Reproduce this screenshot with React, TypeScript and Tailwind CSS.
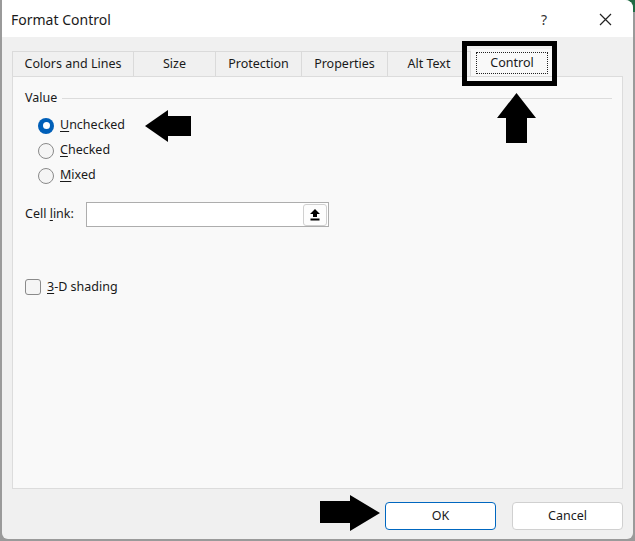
import React from "react";

const font = { fontFamily: '"Noto Sans", "Open Sans", sans-serif' };

function Radio({ checked, label, u }: { checked?: boolean; label: string; u: number }) {
  return (
    <div className="flex items-center h-[25px]">
      {checked ? (
        <span className="w-[16px] h-[16px] rounded-full bg-[#005fb8] flex items-center justify-center">
          <span className="w-[7px] h-[7px] rounded-full bg-white" />
        </span>
      ) : (
        <span className="w-[16px] h-[16px] rounded-full border border-[#8a8a8a] bg-[#f5f5f5]" />
      )}
      <span className="ml-[6px] text-[12.5px] text-[#1a1a1a]">
        <span className="underline underline-offset-2">{label.slice(0, u)}</span>
        {label.slice(u)}
      </span>
    </div>
  );
}

export default function App() {
  const tabs = [
    { t: "Colors and Lines", w: 122 },
    { t: "Size", w: 82 },
    { t: "Protection", w: 86 },
    { t: "Properties", w: 86 },
    { t: "Alt Text", w: 83 },
  ];
  return (
    <div className="w-[635px] h-[541px] bg-[#9a9a9a] overflow-hidden relative" style={font}>
      <div className="absolute right-0 top-0 w-[12px] h-[12px] bg-[#1f6b44]" />
      <div className="ml-[2px] w-[631px] h-[539px] bg-[#f0f0f0] rounded-tr-[8px] rounded-bl-[6px] rounded-br-[6px] overflow-hidden flex flex-col relative">
        {/* Title bar */}
        <div className="h-[37px] bg-white flex items-center pl-[9px] pt-[1px] shrink-0">
          <span className="text-[14px] text-[#1a1a1a] flex-1">Format Control</span>
          <span className="text-[14px] text-[#333] mr-[52px]">?</span>
          <svg width="13" height="13" viewBox="0 0 13 13" className="mr-[21px]">
            <path d="M1 1 L12 12 M12 1 L1 12" stroke="#222" strokeWidth="1.2" />
          </svg>
        </div>
        {/* Body */}
        <div className="flex-1 flex flex-col px-[10px] pt-[14px]">
          {/* Tabs */}
          <div className="flex h-[25px] relative z-10">
            {tabs.map((x, i) => (
              <div
                key={x.t}
                className={`h-[25px] flex items-center justify-center text-[12.5px] text-[#1a1a1a] border-t border-r border-[#dadada] ${i === 0 ? "border-l" : ""}`}
                style={{ width: x.w }}
              >
                {x.t}
              </div>
            ))}
            <div className="relative w-[82px] h-[27px] -mt-[2px] bg-[#f9f9f9] flex items-start justify-center pt-[3px]">
              <div className="border border-dotted border-[#222] w-[72px] h-[22px] flex items-center justify-center text-[12.5px] text-[#1a1a1a]">
                Control
              </div>
              <div className="absolute left-[-9px] top-[-8px] w-[95px] h-[45px] border-[5px] border-black" />
            </div>
          </div>
          {/* Panel */}
          <div className="h-[413px] bg-[#f9f9f9] border border-[#dcdcdc] flex flex-col pl-[12px] pr-[10px] pt-[13px]">
            <div className="flex items-center h-[17px]">
              <span className="text-[12.5px] text-[#1a1a1a]">Value</span>
              <div className="flex-1 h-px bg-[#dcdcdc] ml-[5px]" />
            </div>
            <div className="pl-[13px] pt-[6px] flex flex-col">
              <Radio checked label="Unchecked" u={1} />
              <Radio label="Checked" u={1} />
              <Radio label="Mixed" u={1} />
            </div>
            <div className="flex items-center mt-[14px]">
              <span className="text-[12.5px] text-[#1a1a1a] w-[61px]">
                Cell <span className="underline underline-offset-2">l</span>ink:
              </span>
              <div className="w-[243px] h-[25px] bg-white border border-[#adadad] flex justify-end items-center pr-[1px]">
                <div className="w-[24px] h-[22px] border border-[#d0d0d0] rounded-[3px] bg-[#fdfdfd] flex items-center justify-center">
                  <svg width="12" height="13" viewBox="0 0 12 13">
                    <path d="M6 1 L11 6 L8 6 L8 9 L4 9 L4 6 L1 6 Z" fill="#000" />
                    <rect x="1.5" y="10.5" width="9" height="2" fill="#000" />
                  </svg>
                </div>
              </div>
            </div>
            <div className="flex items-center mt-[51px]">
              <span className="w-[16px] h-[16px] rounded-[3px] border border-[#8a8a8a] bg-[#f5f5f5]" />
              <span className="ml-[6px] text-[12.5px] text-[#1a1a1a]">
                <span className="underline underline-offset-2">3</span>-D shading
              </span>
            </div>
          </div>
          {/* Buttons */}
          <div className="flex justify-end gap-[16px] mt-[13px]">
            <button className="w-[111px] h-[28px] rounded-[4px] border border-[#0067c0] bg-white text-[12.5px] text-[#1a1a1a]">OK</button>
            <button className="w-[111px] h-[28px] rounded-[4px] border border-[#d0d0d0] bg-white text-[12.5px] text-[#1a1a1a]">Cancel</button>
          </div>
        </div>
      </div>
      {/* Annotation arrows */}
      <svg className="absolute left-[145px] top-[110px]" width="46" height="32" viewBox="0 0 46 32">
        <path d="M0 16 L23 0 L23 6 L46 6 L46 26 L23 26 L23 32 Z" fill="#000" />
      </svg>
      <svg className="absolute left-[497px] top-[93px]" width="39" height="50" viewBox="0 0 39 50">
        <path d="M19.5 0 L39 25 L30 25 L30 50 L9 50 L9 25 L0 25 Z" fill="#000" />
      </svg>
      <svg className="absolute left-[320px] top-[495px]" width="60" height="36" viewBox="0 0 60 36">
        <path d="M60 18 L30 0 L30 6 L0 6 L0 28 L30 28 L30 36 Z" fill="#000" />
      </svg>
    </div>
  );
}
